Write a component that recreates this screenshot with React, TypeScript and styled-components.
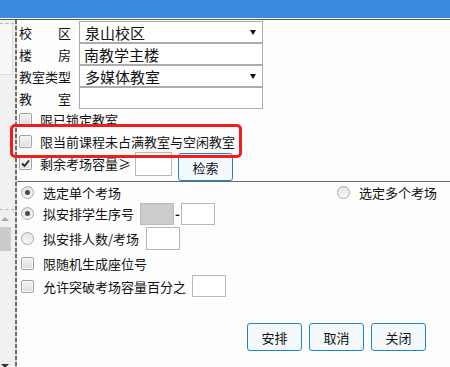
import React from "react";
import styled, { createGlobalStyle } from "styled-components";

const GlobalStyle = createGlobalStyle`
  html, body { margin: 0; padding: 0; background: #fdfdfd; }
  body { font-family: "Noto Sans CJK SC", "Noto Sans", sans-serif; color: #111; }
  #root { width: 450px; height: 367px; overflow: hidden; }
`;

const Window = styled.div`
  position: relative;
  width: 450px;
  height: 367px;
  display: flex;
  flex-direction: column;
  background: #fdfdfd;
  overflow: hidden;
`;

const TitleBar = styled.div`
  flex: none;
  height: 18px;
  background: #388be1;
`;

const Body = styled.div`
  flex: 1;
  min-height: 0;
  display: flex;
  margin-top: 1px;
  border-top: 1px solid #5a5a5a;
`;

const Side = styled.div`
  flex: none;
  width: 15px;
  background: #f0f0f0;
  display: flex;
  flex-direction: column;
`;

const SideDash = styled.div<{ $top: number }>`
  margin-top: ${(p) => p.$top}px;
  width: 14px;
  height: 0;
  border-top: 1px dashed #b9b9b9;
`;

const SideBox = styled.div`
  width: 12px;
  height: 50px;
  background: #f8f8f8;
  border-right: 1px solid #dddddd;
  border-bottom: 1px solid #dddddd;
`;

const ScrollUp = styled.div`
  margin: 7px 0 0 1px;
  width: 0;
  height: 0;
  border-left: 4px solid transparent;
  border-right: 4px solid transparent;
  border-bottom: 4px solid #a8a8a8;
`;

const Thumb = styled.div`
  margin-top: 6px;
  width: 11px;
  height: 24px;
  background: #cbcbcb;
`;

const ScrollDown = styled.div`
  margin: auto 0 -1px 1px;
  width: 0;
  height: 0;
  border-left: 4px solid transparent;
  border-right: 4px solid transparent;
  border-top: 4px solid #333;
`;

const Splitter = styled.div`
  flex: none;
  width: 2px;
  background: repeating-linear-gradient(to bottom, #6e6e6e 0 4px, #d6d6d6 4px 6px);
`;

const Main = styled.div`
  flex: 1;
  min-width: 0;
  display: flex;
  flex-direction: column;
`;

const TopForm = styled.div`
  display: flex;
  flex-direction: column;
  padding: 1px 0 0 2px;
`;

const FieldRow = styled.div`
  display: flex;
  align-items: center;
  height: 22px;
`;

const FieldLabel = styled.div`
  width: 52px;
  margin-right: 8px;
  display: flex;
  justify-content: space-between;
  font-size: 13px;
  line-height: 1;
  white-space: nowrap;
`;

const SelectBox = styled.div`
  box-sizing: border-box;
  width: 184px;
  height: 22px;
  border: 1px solid #acacac;
  background: #fff;
  display: flex;
  align-items: center;
  justify-content: space-between;
  padding: 0 6px 0 5px;
  font-size: 15px;
  line-height: 1;
`;

const TextBox = styled(SelectBox)`
  padding-left: 4px;
`;

const Caret = styled.span`
  width: 0;
  height: 0;
  border-left: 3px solid transparent;
  border-right: 3px solid transparent;
  border-top: 5px solid #111;
`;

const CheckRow = styled.div<{ $h: number }>`
  display: flex;
  align-items: center;
  height: ${(p) => p.$h}px;
  font-size: 13px;
  line-height: 1;
`;

const SearchRow = styled.div`
  display: flex;
  align-items: flex-start;
  height: 29px;
`;

const OptionLabel = styled.div<{ $gap: number }>`
  display: flex;
  align-items: center;
  gap: ${(p) => p.$gap}px;
  height: 22px;
  font-size: 13px;
  line-height: 1;
  white-space: nowrap;
`;

const CheckBox = styled.span<{ $checked?: boolean }>`
  box-sizing: border-box;
  flex: none;
  width: 13px;
  height: 13px;
  border: 1px solid #a2a2a2;
  border-radius: 2px;
  background: linear-gradient(#f3f3f3, #dedede);
  box-shadow: inset 0 0 0 1px #f8f8f8;
  display: flex;
  align-items: center;
  justify-content: center;
`;

const Radio = styled.span<{ $on?: boolean }>`
  box-sizing: border-box;
  flex: none;
  width: 13px;
  height: 13px;
  border: 1px solid #a9a9a9;
  border-radius: 50%;
  background: linear-gradient(#e4e4e4, #f7f7f7);
  display: flex;
  align-items: center;
  justify-content: center;
  &::after {
    content: "";
    display: ${(p) => (p.$on ? "block" : "none")};
    width: 5px;
    height: 5px;
    border-radius: 50%;
    background: #4c4c4c;
  }
`;

const SmallInput = styled.div<{ $w: number; $h: number; $ml: number; $mt?: number; $disabled?: boolean }>`
  box-sizing: border-box;
  flex: none;
  width: ${(p) => p.$w}px;
  height: ${(p) => p.$h}px;
  margin-left: ${(p) => p.$ml}px;
  margin-top: ${(p) => p.$mt ?? 0}px;
  border: 1px solid ${(p) => (p.$disabled ? "#bababa" : "#b7b7b7")};
  background: ${(p) => (p.$disabled ? "#cccccc" : "#ffffff")};
`;

const Button = styled.button<{ $mt?: number; $ml?: number }>`
  box-sizing: border-box;
  flex: none;
  width: 55px;
  height: 28px;
  margin-top: ${(p) => p.$mt ?? 0}px;
  margin-left: ${(p) => p.$ml ?? 0}px;
  padding: 0;
  border: 1px solid #1f86c6;
  border-radius: 3px;
  background: #f4f9fe;
  color: #111;
  font-family: inherit;
  font-size: 13px;
  line-height: 1;
`;

const Lower = styled.div`
  display: flex;
  flex-direction: column;
  border-top: 1px solid #6a6a6a;
  padding-left: 4px;
`;

const OptRow = styled.div<{ $h: number }>`
  display: flex;
  align-items: center;
  height: ${(p) => p.$h}px;
  font-size: 13px;
  line-height: 1;
`;

const RightOption = styled(OptionLabel)`
  margin-left: auto;
  margin-right: 13px;
`;

const Dash = styled.span`
  flex: none;
  width: 7px;
  text-align: center;
  font-size: 13px;
  font-weight: bold;
`;

const ButtonBar = styled.div`
  display: flex;
  justify-content: flex-end;
  gap: 7px;
  margin-top: 25px;
  padding-right: 24px;
`;

const Highlight = styled.div`
  position: absolute;
  left: 10px;
  top: 124px;
  width: 232px;
  height: 34px;
  box-sizing: border-box;
  border: 3px solid #ee1e1e;
  border-radius: 5px;
  pointer-events: none;
`;

const Check = () => (
  <svg width="9" height="9" viewBox="0 0 9 9">
    <path d="M1 4.5 L3.5 7 L8 1.5" fill="none" stroke="#222" strokeWidth="1.8" />
  </svg>
);

const Label = ({ text }: { text: string }) => (
  <FieldLabel>
    {Array.from(text).map((c, i) => (
      <span key={i}>{c}</span>
    ))}
  </FieldLabel>
);

export default function App() {
  return (
    <>
      <GlobalStyle />
      <Window>
        <TitleBar />
        <Body>
          <Side>
            <SideDash $top={3} />
            <SideBox />
            <SideDash $top={134} />
            <ScrollUp />
            <Thumb />
            <ScrollDown />
          </Side>
          <Splitter />
          <Main>
            <TopForm>
              <FieldRow>
                <Label text="校区" />
                <SelectBox>
                  <span>泉山校区</span>
                  <Caret />
                </SelectBox>
              </FieldRow>
              <FieldRow>
                <Label text="楼房" />
                <TextBox>南教学主楼</TextBox>
              </FieldRow>
              <FieldRow>
                <Label text="教室类型" />
                <SelectBox>
                  <span>多媒体教室</span>
                  <Caret />
                </SelectBox>
              </FieldRow>
              <FieldRow>
                <Label text="教室" />
                <TextBox />
              </FieldRow>
              <CheckRow $h={21}>
                <OptionLabel $gap={8}>
                  <CheckBox />
                  <span>限已锁定教室</span>
                </OptionLabel>
              </CheckRow>
              <CheckRow $h={22}>
                <OptionLabel $gap={8}>
                  <CheckBox />
                  <span>限当前课程未占满教室与空闲教室</span>
                </OptionLabel>
              </CheckRow>
              <SearchRow>
                <OptionLabel $gap={8}>
                  <CheckBox $checked>
                    <Check />
                  </CheckBox>
                  <span>剩余考场容量≥</span>
                </OptionLabel>
                <SmallInput $w={37} $h={24} $ml={4} />
                <Button $mt={1} $ml={6}>检索</Button>
              </SearchRow>
            </TopForm>
            <Lower>
              <OptRow $h={20}>
                <OptionLabel $gap={9}>
                  <Radio $on />
                  <span>选定单个考场</span>
                </OptionLabel>
                <RightOption $gap={9}>
                  <Radio />
                  <span>选定多个考场</span>
                </RightOption>
              </OptRow>
              <OptRow $h={23}>
                <OptionLabel $gap={9}>
                  <Radio $on />
                  <span>拟安排学生序号</span>
                </OptionLabel>
                <SmallInput $w={34} $h={22} $ml={6} $disabled />
                <Dash>-</Dash>
                <SmallInput $w={34} $h={22} $ml={0} />
              </OptRow>
              <OptRow $h={27}>
                <OptionLabel $gap={9}>
                  <Radio />
                  <span>拟安排人数/考场</span>
                </OptionLabel>
                <SmallInput $w={34} $h={23} $ml={7} />
              </OptRow>
              <OptRow $h={22}>
                <OptionLabel $gap={9}>
                  <CheckBox />
                  <span>限随机生成座位号</span>
                </OptionLabel>
              </OptRow>
              <OptRow $h={24}>
                <OptionLabel $gap={9}>
                  <CheckBox />
                  <span>允许突破考场容量百分之</span>
                </OptionLabel>
                <SmallInput $w={34} $h={22} $ml={6} />
              </OptRow>
            </Lower>
            <ButtonBar>
              <Button>安排</Button>
              <Button>取消</Button>
              <Button>关闭</Button>
            </ButtonBar>
          </Main>
        </Body>
        <Highlight />
      </Window>
    </>
  );
}
